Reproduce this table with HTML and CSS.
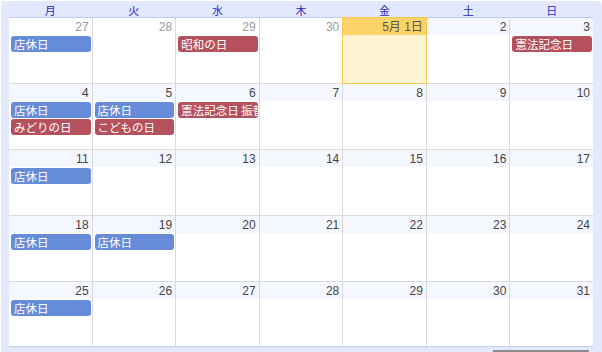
FILE: index.html
```html
<!DOCTYPE html>
<html lang="ja">
<head>
<meta charset="utf-8">
<title>カレンダー</title>
<link rel="stylesheet" href="styles.css">
</head>
<body>
<div class="cal">
  <div class="dow">
    <div>月</div><div>火</div><div>水</div><div>木</div><div>金</div><div>土</div><div>日</div>
  </div>
  <div class="grid">
    <div class="cell other"><div class="num">27</div><div class="ev blue">店休日</div></div>
    <div class="cell other"><div class="num">28</div></div>
    <div class="cell other"><div class="num">29</div><div class="ev red">昭和の日</div></div>
    <div class="cell other"><div class="num">30</div></div>
    <div class="cell today"><div class="num">5月 1日</div></div>
    <div class="cell"><div class="num">2</div></div>
    <div class="cell"><div class="num">3</div><div class="ev red">憲法記念日</div></div>

    <div class="cell"><div class="num">4</div><div class="ev blue">店休日</div><div class="ev red">みどりの日</div></div>
    <div class="cell"><div class="num">5</div><div class="ev blue">店休日</div><div class="ev red">こどもの日</div></div>
    <div class="cell"><div class="num">6</div><div class="ev red">憲法記念日 振替休日</div></div>
    <div class="cell"><div class="num">7</div></div>
    <div class="cell"><div class="num">8</div></div>
    <div class="cell"><div class="num">9</div></div>
    <div class="cell"><div class="num">10</div></div>

    <div class="cell"><div class="num">11</div><div class="ev blue">店休日</div></div>
    <div class="cell"><div class="num">12</div></div>
    <div class="cell"><div class="num">13</div></div>
    <div class="cell"><div class="num">14</div></div>
    <div class="cell"><div class="num">15</div></div>
    <div class="cell"><div class="num">16</div></div>
    <div class="cell"><div class="num">17</div></div>

    <div class="cell"><div class="num">18</div><div class="ev blue">店休日</div></div>
    <div class="cell"><div class="num">19</div><div class="ev blue">店休日</div></div>
    <div class="cell"><div class="num">20</div></div>
    <div class="cell"><div class="num">21</div></div>
    <div class="cell"><div class="num">22</div></div>
    <div class="cell"><div class="num">23</div></div>
    <div class="cell"><div class="num">24</div></div>

    <div class="cell"><div class="num">25</div><div class="ev blue">店休日</div></div>
    <div class="cell"><div class="num">26</div></div>
    <div class="cell"><div class="num">27</div></div>
    <div class="cell"><div class="num">28</div></div>
    <div class="cell"><div class="num">29</div></div>
    <div class="cell"><div class="num">30</div></div>
    <div class="cell"><div class="num">31</div></div>
  </div>
  <div class="foot"><div class="bar"></div></div>
</div>
</body>
</html>
```

FILE: styles.css
```css
html, body {
  margin: 0;
  padding: 0;
  background: #ffffff;
}

body {
  font-family: "Liberation Sans", "Noto Sans CJK JP", sans-serif;
}

.cal {
  box-sizing: border-box;
  margin: 1px 0 0 1px;
  width: 601px;
  height: 351px;
  padding: 0 9px 0 8px;
  background: #e3e9fd;
  border-radius: 4px 4px 0 0;
}

.dow {
  box-sizing: border-box;
  display: grid;
  grid-template-columns: repeat(7, 1fr);
  column-gap: 1px;
  height: 17px;
  padding-top: 4px;
  border-bottom: 1px solid #bccbf6;
  font-family: "Liberation Sans", "Noto Sans CJK JP", sans-serif;
  font-size: 11px;
  line-height: 12px;
  color: #2a26cc;
  text-align: center;
}

.grid {
  display: grid;
  grid-template-columns: repeat(7, 1fr);
  grid-template-rows: 65px 65px 65px 65px 64px;
  gap: 1px;
  background: #dadada;
  border-bottom: 1px solid #c2cff6;
}

.cell {
  background: #ffffff;
  overflow: hidden;
  min-width: 0;
}

.num {
  box-sizing: border-box;
  height: 17px;
  padding: 1px 3px 0 0;
  line-height: 16px;
  font-size: 12px;
  text-align: right;
  color: #444444;
  background: #f5f7fe;
  white-space: nowrap;
}

.other .num {
  color: #999999;
  background: #ffffff;
}

.today {
  background: #fff5d5;
  box-shadow: 0 0 0 1px #f3c84c;
}

.today .num {
  background: #fbd366;
  color: #555555;
}

.ev {
  height: 16px;
  margin: 1px 1px 0 2px;
  padding-left: 3px;
  border-radius: 3px;
  font-family: "Noto Sans CJK JP", "Liberation Sans", sans-serif;
  font-size: 11.5px;
  line-height: 16px;
  color: #ffffff;
  white-space: nowrap;
  overflow: hidden;
}

.blue {
  background: #668cd9;
}

.red {
  background: #b5515d;
}

.foot {
  display: flex;
  justify-content: flex-end;
  margin-top: 3px;
}

.bar {
  width: 96px;
  height: 2px;
  margin-right: 4px;
  background: #8c8c8c;
}
```
